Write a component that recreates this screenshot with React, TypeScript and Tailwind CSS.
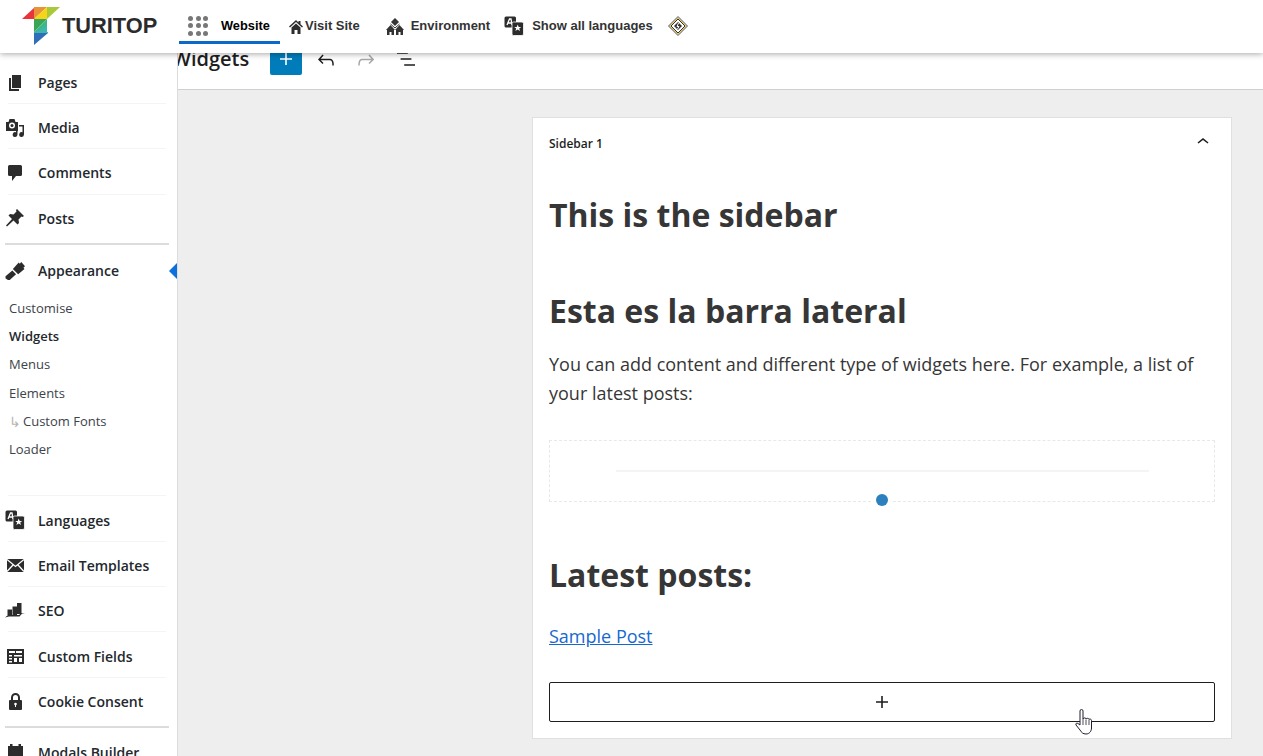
import type { ReactNode } from "react";

function PagesIcon() {
  return (
    <svg width="16" height="18" viewBox="0 0 16 18" fill="#2c2c2c">
      <path d="M5 1h9v13H5z" />
      <path d="M2 4h2v11h8v2H2z" />
    </svg>
  );
}

function MediaIcon() {
  return (
    <svg width="18" height="18" viewBox="0 0 18 18" fill="#2c2c2c">
      <path d="M0 3h2.500l1-3h5l1 3H12v9H0z" />
      <circle cx="6" cy="6.500" r="3" fill="#fff" />
      <circle cx="6" cy="6.500" r="1.500" />
      <path d="M13 6h5v9.500a2.400 2.400 0 1 1-1.500-2.200V7.500H13z" />
      <path d="M10 12h1.500v3.500a2.400 2.400 0 1 1-1.500-2.200z" />
    </svg>
  );
}

function CommentIcon() {
  return (
    <svg width="14" height="16" viewBox="0 0 14 16" fill="#2c2c2c">
      <path d="M1.500 0h11A1.500 1.500 0 0 1 14 1.500V9.500a1.500 1.500 0 0 1-1.500 1.500H8l-4 5v-5H1.500A1.500 1.500 0 0 1 0 9.500V1.500A1.500 1.500 0 0 1 1.500 0z" />
    </svg>
  );
}

function PinIcon() {
  return (
    <svg width="18" height="18" viewBox="0 0 18 18" fill="#2c2c2c">
      <path d="M11 0l7 7-1.500 1-1-.5-3 3 .5 3.500-1.500 1.500-4-4L1 17.500l-1-1L6 10 2.500 6.500 4 5l3.500.5 3-3-.5-1.500z" />
    </svg>
  );
}

function BrushIcon() {
  return (
    <svg width="20" height="18" viewBox="0 0 19 17" fill="#2c2c2c">
      <path d="M0.500 13.500L7 8l3.500 3.500-6 5.500Q2 17.500 0.500 15.500z" />
      <path d="M7.500 6.500L13 0.500l1 1 1.500-1.500 3.500 4L17.500 5.500l1 1-6 5z" />
    </svg>
  );
}

function TranslateIcon({ size = 20 }: { size?: number }) {
  return (
    <svg width={size} height={size} viewBox="0 0 20 20">
      <rect x="0.500" y="0.500" width="11.500" height="11" rx="1.500" fill="#2c2c2c" />
      <path d="M3 9l2.500-6h1.500l1 6M4.200 7h3.500" stroke="#fff" strokeWidth="1.300" fill="none" />
      <rect x="8" y="6" width="11.500" height="13.500" rx="1.500" fill="#2c2c2c" stroke="#fff" strokeWidth="0.800" />
      <path d="M13.700 8.500l1 2.400h2.500l-2 1.600.8 2.600-2.300-1.500-2.300 1.500.8-2.600-2-1.600h2.500z" fill="#fff" />
    </svg>
  );
}

function MailIcon() {
  return (
    <svg width="17" height="13" viewBox="0 0 17 13">
      <rect width="17" height="13" fill="#2c2c2c" />
      <path d="M0 0.500L8.500 7.500 17 0.500M0 12.500L6 6M17 12.500L11 6" stroke="#fff" strokeWidth="1.300" fill="none" />
    </svg>
  );
}

function SeoIcon() {
  return (
    <svg width="20" height="15" viewBox="0 0 20 15" fill="#2c2c2c">
      <path d="M2.500 6.500h4.500V12H2.500zM7.500 3.500h4.500V12H7.500zM12 0h4.500v11H12z" />
      <path d="M0 14.500l3-2.500h11l2.500-2 3.500 1-3-.2-2.500 2.700H4z" />
    </svg>
  );
}

function FieldsIcon() {
  return (
    <svg width="17" height="15" viewBox="0 0 17 15">
      <rect width="17" height="15" fill="#2c2c2c" />
      <path d="M2 2h6v2H2zM9 2h6v2H9zM2 6h3v1.500H2zM2 9h3v1.500H2zM2 12h3v1.500H2zM7 6h8v1.500H7zM7 9h3v4H7zM12 9h3v4h-3z" fill="#fff" />
    </svg>
  );
}

function LockIcon() {
  return (
    <svg width="13" height="17" viewBox="0 0 13 17">
      <path d="M3 7V4.500a3.500 3.500 0 0 1 7 0V7" fill="none" stroke="#2c2c2c" strokeWidth="2" />
      <rect y="7" width="13" height="10" rx="1" fill="#2c2c2c" />
      <circle cx="6.500" cy="11" r="1.300" fill="#fff" />
      <path d="M6 11h1v3H6z" fill="#fff" />
    </svg>
  );
}

function CalendarIcon() {
  return (
    <svg width="15" height="16" viewBox="0 0 15 16" fill="#2c2c2c">
      <path d="M2 0h2.500v2h6V0H13v2h2v14H0V2h2z" />
    </svg>
  );
}

function SideItem({ icon, label, divider = true }: { icon: ReactNode; label: string; divider?: boolean }) {
  return (
    <div className="h-[45.2px] shrink-0 flex items-center relative">
      <div className="w-[38px] flex justify-center pr-[8px] shrink-0">{icon}</div>
      <span className="text-[14px] font-semibold text-[#23282d]">{label}</span>
      {divider && <div className="absolute left-[8px] right-[11px] bottom-[1px] h-px bg-[#f4f4f4]" />}
    </div>
  );
}

function Sidebar() {
  return (
    <aside className="w-[178px] shrink-0 h-full bg-white border-r border-[#dcdcdc] relative z-10 overflow-hidden pt-[7px]">
      <SideItem icon={<PagesIcon />} label="Pages" />
      <SideItem icon={<MediaIcon />} label="Media" />
      <SideItem icon={<CommentIcon />} label="Comments" />
      <SideItem icon={<PinIcon />} label="Posts" divider={false} />
      <div className="ml-[5px] mr-[8px] h-[2px] bg-[#dcdcdc] mt-[2px]" />
      <div className="h-[52px] flex items-center relative">
        <div className="w-[38px] flex justify-center pr-[8px]">
          <BrushIcon />
        </div>
        <span className="text-[14px] font-semibold text-[#23282d]">Appearance</span>
        <div className="absolute right-0 top-[18px] w-0 h-0 border-y-[8px] border-y-transparent border-r-[8px] border-r-[#0b6fdc]" />
      </div>
      <div className="pl-[9px] text-[13px] text-[#3c434a] flex flex-col -mt-[2px]">
        <div className="h-[28.200px] flex items-center">Customise</div>
        <div className="h-[28.200px] flex items-center font-semibold text-[#23282d]">Widgets</div>
        <div className="h-[28.200px] flex items-center">Menus</div>
        <div className="h-[28.200px] flex items-center">Elements</div>
        <div className="h-[28.200px] flex items-center">
          <span className="text-[#b5b5b5] w-[14px] text-[14px]">↳</span>
          Custom Fonts
        </div>
        <div className="h-[28.200px] flex items-center">Loader</div>
      </div>
      <div className="ml-[8px] mr-[11px] h-px bg-[#f4f4f4] mt-[31px]" />
      <div className="mt-[2px]">
        <SideItem icon={<TranslateIcon />} label="Languages" />
        <SideItem icon={<MailIcon />} label="Email Templates" />
        <SideItem icon={<SeoIcon />} label="SEO" />
        <SideItem icon={<FieldsIcon />} label="Custom Fields" />
        <SideItem icon={<LockIcon />} label="Cookie Consent" divider={false} />
      </div>
      <div className="ml-[5px] mr-[8px] h-[2px] bg-[#dcdcdc] mt-[2px]" />
      <div className="mt-[2px]">
        <SideItem icon={<CalendarIcon />} label="Modals Builder" divider={false} />
      </div>
    </aside>
  );
}

function Logo() {
  return (
    <svg width="40" height="40" viewBox="22 6 40 40" className="shrink-0">
      <path d="M22 19L35 7v12z" fill="#e8343a" />
      <path d="M34 7h13L34 19z" fill="#e8933a" />
      <path d="M47 7v12H34z" fill="#f7d417" />
      <path d="M47 7h13L47 19z" fill="#a8c93a" />
      <path d="M34 19h13L34 32z" fill="#3aa655" />
      <path d="M47 19v13H34z" fill="#3fb58c" />
      <path d="M34 32h14v1L34 33z" fill="#3fb5b5" />
      <path d="M47 26v7H34z" fill="#3eb6ae" />
      <path d="M34 33h14L34 45z" fill="#2f6fb8" />
    </svg>
  );
}

function TopBar() {
  return (
    <header className="h-[53px] shrink-0 bg-white flex items-start relative z-20 shadow-[0_1px_6px_rgba(0,0,0,0.35)] font-['Liberation_Sans',sans-serif]">
      <div className="ml-[22px] mt-[6px] w-[135px] flex items-start">
        <Logo />
        <span className="text-[21.8px] font-bold text-[#2b2b2b] leading-none mt-[9px]">TURITOP</span>
      </div>
      <div className="ml-[22px] w-[101px] h-[44px] border-b-[3px] border-[#0b69c7] flex items-center pl-[9px] pt-[10px]">
        <div className="grid grid-cols-3 gap-[2.500px] w-[20px]">
          {[0, 1, 2, 3, 4, 5, 6, 7, 8].map((i) => (
            <div key={i} className="w-[5px] h-[5px] rounded-full bg-[#777]" />
          ))}
        </div>
        <span className="ml-[13px] text-[12.800px] font-bold text-black">Website</span>
      </div>
      <div className="flex items-center h-[52px] text-[13px] font-bold text-[#333]">
        <svg width="14" height="14" viewBox="0 0 14 14" fill="#2c2c2c" className="ml-[9px] mt-[2px]">
          <path d="M7 0L0 6.500l1 1 6-5.500 6 5.500 1-1-2.500-2.300V1h-2v1.400z" />
          <path d="M2.500 7.500L7 3.500l4.500 4V14H8.500v-4h-3v4h-3z" />
        </svg>
        <span className="ml-[2px]">Visit Site</span>
        <svg width="20" height="18" viewBox="0 0 20 18" className="ml-[25px] mt-[1px]">
          <path d="M10 0l4 4-4 4-4-4z" fill="#333" />
          <path d="M5.500 6L10 10l4.500-4" stroke="#333" fill="none" />
          <path d="M5.500 7L10 12H1z" fill="#333" />
          <path d="M14.500 7L19 12h-9z" fill="#333" />
          <path d="M2 12h7v5H2zM11 12h7v5h-7z" fill="#333" />
          <path d="M4.500 14h2v3h-2zM13.500 14h2v3h-2z" fill="#fff" />
        </svg>
        <span className="ml-[6px]">Environment</span>
        <div className="ml-[14px] flex">
          <TranslateIcon />
        </div>
        <span className="ml-[8px]">Show all languages</span>
        <svg width="20" height="20" viewBox="0 0 20 20" className="ml-[15px]">
          <path d="M10 0.500L19.500 10 10 19.500 0.500 10z" fill="#f2c76b" stroke="#4a6a8a" />
          <path d="M10 3l7 7-7 7-7-7z" fill="#fff" stroke="#333" />
          <path d="M10 6l4 4-4 4-4-4z" fill="#333" />
          <path d="M10.500 7L9 10.500h2L9.500 13" stroke="#fff" fill="none" />
        </svg>
      </div>
    </header>
  );
}

function ToolbarIcon({ d, color = "#1e1e1e", className }: { d: string; color?: string; className?: string }) {
  return (
    <svg width="24" height="24" viewBox="0 0 24 24" fill={color} className={className}>
      <path d={d} />
    </svg>
  );
}

function Toolbar() {
  return (
    <div className="h-[37px] shrink-0 bg-white border-b border-[#d0d0d0] flex items-start">
      <span className="-ml-[6px] -mt-[9px] text-[20px] font-semibold text-[#1e1e1e] leading-[30px] w-[98px] shrink-0">Widgets</span>
      <div className="-mt-[8px] w-[32px] h-[30px] pb-[2px] bg-[#007cba] rounded-b-[2px] flex items-center justify-center shrink-0">
        <ToolbarIcon d="M18 11.200h-5.200V6h-1.600v5.200H6v1.600h5.200V18h1.600v-5.200H18z" color="#fff" />
      </div>
      <ToolbarIcon className="ml-[12px] -mt-[5px]" d="M18.300 11.700c-.6-.6-1.400-.9-2.300-.9H6.700l2.900-3.300-1.100-1-4.500 5L8.500 16l1-1-2.700-2.700H16c.5 0 .9.2 1.300.5 1 1 1 3.400 1 4.500v.3h1.500v-.2c0-1.500 0-4.300-1.500-5.700z" />
      <ToolbarIcon className="ml-[16px] -mt-[5px]" color="#a7a7a7" d="M15.600 6.500l-1.100 1 2.900 3.300H8c-.9 0-1.700.3-2.300.9-1.400 1.500-1.400 4.200-1.400 5.600v.2h1.500v-.3c0-1.100 0-3.500 1-4.500.3-.3.7-.5 1.300-.5h9.200L14.500 15l1.100 1.100 4.600-4.600-4.600-5z" />
      <ToolbarIcon className="ml-[16px] -mt-[6px]" d="M13.800 5.200H3v1.500h10.800V5.200zm-3.600 12v1.500H21v-1.500H10.200zm7.200-6H6.600v1.500h10.800v-1.500z" />
    </div>
  );
}

function HandCursor() {
  return (
    <svg width="18" height="26" viewBox="0 0 18 26" className="absolute left-[1075px] top-[709px] z-30">
      <path
        d="M5 2a1.500 1.500 0 0 1 3 0v8c.5-1.500 3-1.500 3 0 .5-1 3-1 3 .5.500-.8 2.500-.5 2.500 1V19c0 3-2 6-5.500 6-3 0-4.500-1.500-6-4L1 16c-.8-1.500 1-2.500 2-1.500L5 16z"
        fill="#fff"
        stroke="#1e1e2e"
        strokeWidth="1"
      />
      <path d="M8 10v6M11 10.500v5.500M14 11v5" stroke="#1e1e2e" strokeWidth="0.800" />
    </svg>
  );
}

function WidgetCard() {
  return (
    <section className="ml-[354px] mt-[27px] w-[700px] h-[622px] shrink-0 bg-white border border-[#e0e0e0] px-[16px] text-[#363636]">
      <div className="h-[50px] flex items-center justify-between">
        <span className="text-[12px] font-semibold text-[#1e1e1e] mt-[2px]">Sidebar 1</span>
        <ToolbarIcon className="-mt-[2px]" d="M6.500 12.400L12 8l5.500 4.400-.9 1.200L12 10l-4.500 3.600-1-1.200z" />
      </div>
      <h2 className="mt-[27px] text-[32px] font-bold leading-[40px]">This is the sidebar</h2>
      <h2 className="mt-[56px] text-[32px] font-bold leading-[40px]">Esta es la barra lateral</h2>
      <p className="mt-[19px] text-[18px] leading-[29px]">
        You can add content and different type of widgets here. For example, a list of your latest posts:
      </p>
      <div className="mt-[32px] h-[62px] border border-dashed border-[#e8e8e8] relative flex justify-center">
        <div className="mt-[29px] w-[533px] h-[2px] bg-[#f4f4f4]" />
        <div className="absolute left-[326px] bottom-[-5px] w-[12px] h-[12px] rounded-full bg-[#2b80bd] ring-[3px] ring-white" />
      </div>
      <h2 className="mt-[53px] text-[32px] font-bold leading-[40px]">Latest posts:</h2>
      <a className="block mt-[27px] text-[18px] leading-[29px] text-[#1668d0] underline">Sample Post</a>
      <div className="mt-[31px] h-[40px] border border-[#1e1e1e] rounded-[2px] flex items-center justify-center">
        <ToolbarIcon d="M18 11.200h-5.200V6h-1.600v5.200H6v1.600h5.200V18h1.600v-5.200H18z" />
      </div>
    </section>
  );
}

export default function App() {
  return (
    <div className="w-[1263px] h-[756px] overflow-hidden relative flex flex-col bg-[#eeeeee] font-['Open_Sans',sans-serif]">
      <TopBar />
      <div className="flex-1 flex min-h-0">
        <Sidebar />
        <main className="flex-1 min-w-0 flex flex-col">
          <Toolbar />
          <WidgetCard />
        </main>
      </div>
      <HandCursor />
    </div>
  );
}
